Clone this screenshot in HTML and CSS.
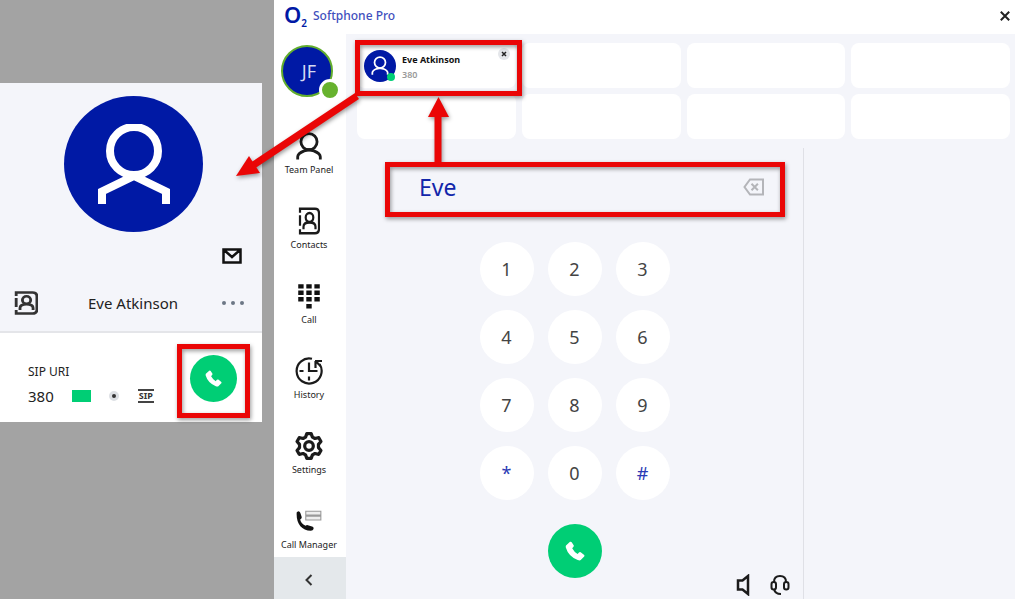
FILE: index.html
```html
<!DOCTYPE html>
<html lang="en">
<head>
<meta charset="utf-8">
<title>Softphone Pro</title>
<link rel="stylesheet" href="styles.css">
</head>
<body>
<svg class="symbols" aria-hidden="true">
  <symbol id="person" viewBox="0 0 72 80">
    <circle cx="36" cy="27" r="24"/>
    <path d="M4 80V67.500L36 52l32 15.500V80"/>
  </symbol>
  <symbol id="contact" viewBox="0 0 22 24" preserveAspectRatio="none">
    <path d="M2 5V1.500h15q4 0 4 4v13q0 4-4 4H2V19M2 7v9"/>
    <circle cx="11.500" cy="9" r="3.800"/>
    <path d="M5.500 19v-2q0-3.800 6-3.800t6 3.800v2"/>
  </symbol>
  <symbol id="handset" viewBox="0 0 20 20">
    <path d="M1 4.500 5 .8Q6 .3 6.700 1.300L8.800 4.400Q9 5.200 8.300 6L7.200 7.300Q9.300 11.200 12.600 13.100L14 11.500q.8-.8 1.700-.2l3.500 2.700q.6.800 0 1.600l-3.500 3.500q-1 .6-3-.1Q3.500 15.500.8 6.500.6 5.200 1 4.500Z"/>
  </symbol>
</svg>
<div class="stage">
  <aside class="backdrop">
    <section class="card">
      <div class="card-top">
        <div class="portrait"><svg class="line"><use href="#person"/></svg></div>
        <button class="plain mail" aria-label="Send mail"><svg class="mail-icon" viewBox="0 0 20 16"><path d="M1.500 1.500h17v13h-17zM2 2l8 7 8-7"/></svg></button>
        <div class="name-row">
          <svg class="contact-icon"><use href="#contact"/></svg>
          <h2>Eve Atkinson</h2>
          <button class="plain more" aria-label="More"><svg viewBox="0 0 22 4"><circle cx="2" cy="2" r="2"/><circle cx="11" cy="2" r="2"/><circle cx="20" cy="2" r="2"/></svg></button>
        </div>
      </div>
      <div class="card-bottom">
        <div class="uri">
          <div class="uri-label">SIP URI</div>
          <div class="uri-row">
            <span class="number">380</span>
            <span class="status"></span>
            <span class="dot"></span>
            <span class="sip">SIP</span>
          </div>
        </div>
        <button class="call call-small" aria-label="Call Eve Atkinson"><svg viewBox="0 0 20 20"><use href="#handset"/></svg></button>
      </div>
    </section>
  </aside>

  <div class="app">
    <header class="titlebar">
      <span class="logo">O<sub>2</sub></span>
      <h1>Softphone Pro</h1>
      <button class="plain close" aria-label="Close"><svg viewBox="0 0 10 10"><path d="m.8.8 8.400 8.400M9.200.8.8 9.200"/></svg></button>
    </header>

    <nav class="sidebar">
      <div class="me">JF<span class="presence"></span></div>
      <a class="item" href="#team"><svg class="line team" viewBox="0 0 24 26"><circle cx="12" cy="9" r="7.500"/><path d="M1.500 25.500V23q0-3 6-5.500l4.500-1 4.500 1q6 2.500 6 5.500v2.500"/></svg>Team Panel</a>
      <a class="item" href="#contacts"><svg class="line book"><use href="#contact"/></svg>Contacts</a>
      <a class="item" href="#call"><svg class="solid" viewBox="0 0 22 26"><path d="M1 2h5v4H1zM8.500 2h5v4h-5zM16 2h5v4h-5zM1 8h5v4H1zM8.500 8h5v4h-5zM16 8h5v4h-5zM1 14h5v4H1zM8.500 14h5v4h-5zM16 14h5v4h-5zM8.500 20.500h5v4h-5z"/></svg>Call</a>
      <a class="item" href="#history"><svg class="line" viewBox="0 0 28 28"><path d="M17 1.800A12.500 12.500 0 1 0 24.500 7"/><path d="M14 5.500V14h8.500M14 19.500v4M4.500 14h4M20.500 4v7M20 4h7M21 4.500l4.500 4.500"/></svg>History</a>
      <a class="item" href="#settings"><svg class="line gear" viewBox="-13 -13 26 26"><path d="M-2-11.500h4l1.200 3.300L5.500-7l3.600-.7 2 3.500L8.800-1.500v3l2.300 2.700-2 3.500L5.500 7 3.200 8.200 2 11.500h-4l-1.200-3.300L-5.500 7l-3.600.7-2-3.500 2.300-2.700v-3l-2.300-2.700 2-3.500 3.600.7 2.300-1.200Z"/><circle cx="0" cy="0" r="4"/></svg>Settings</a>
      <a class="item" href="#manager"><svg class="solid" viewBox="0 0 26 26"><path d="M1.500 6.500Q1 4.500 3 4q1.500 0 2 1.500l1.300 4q0 1.500-1.500 2 .5 3.500 5 6 1-1 2.200-.6l4.500 1.500q1.200 1 .7 2-.5 1.600-2.500 1.600C6.500 22 1.500 16 1.500 6.500Z"/><path class="bars" d="M10 4h14v3.500H10zM10 8.500h14V12H10z"/></svg>Call Manager</a>
      <button class="plain collapse" aria-label="Collapse menu"><svg viewBox="0 0 8 12"><path d="M6.500 1 1.500 6l5 5"/></svg></button>
    </nav>

    <main class="main">
      <div class="slots">
        <div class="slot contact">
          <div class="mini"><svg viewBox="0 0 24 26"><circle cx="12" cy="9" r="7.500"/><path d="M1.500 25.500V23q0-3 6-5.500l4.500-1 4.500 1q6 2.500 6 5.500v2.500"/></svg></div>
          <div class="who"><strong>Eve Atkinson</strong><span>380</span></div>
          <button class="plain remove" aria-label="Remove"><svg viewBox="0 0 6 6"><path d="m1 1 4 4M5 1 1 5"/></svg></button>
        </div>
        <div class="slot"></div><div class="slot"></div><div class="slot"></div>
        <div class="slot"></div><div class="slot"></div><div class="slot"></div><div class="slot"></div>
      </div>
      <div class="panels">
        <section class="dialer">
          <div class="entry">
            <input type="text" value="Eve" aria-label="Name or number">
            <button class="plain erase" aria-label="Delete"><svg viewBox="0 0 22 18"><path d="M7 1.500h13v15H7L1.500 9Z"/><path d="m8.500 5.800 6.400 6.400M14.900 5.800l-6.400 6.400"/></svg></button>
          </div>
          <div class="keys">
            <button>1</button><button>2</button><button>3</button>
            <button>4</button><button>5</button><button>6</button>
            <button>7</button><button>8</button><button>9</button>
            <button class="sym">*</button><button>0</button><button class="sym">#</button>
          </div>
          <button class="call call-large" aria-label="Call"><svg viewBox="0 0 20 20"><use href="#handset"/></svg></button>
          <div class="audio">
            <button class="plain" aria-label="Speaker"><svg viewBox="0 0 20 22"><path d="M3 6.500h4.500L13 2v18l-5.500-4.500H3Z"/></svg></button>
            <button class="plain" aria-label="Headset"><svg class="thin" viewBox="0 0 20 22"><path d="M4 8Q4 2 10 2t6 6M4 15q1 5 7 5"/><rect x="1.500" y="8" width="4.500" height="7.500" rx="2.200"/><rect x="14" y="8" width="4.500" height="7.500" rx="2.200"/></svg></button>
          </div>
        </section>
        <section class="side"></section>
      </div>
    </main>
  </div>

  <svg class="notes" width="1015" height="599" viewBox="0 0 1015 599" aria-hidden="true">
    <rect x="357.500" y="42.500" width="162" height="51"/>
    <rect x="387.500" y="164.500" width="395" height="50"/>
    <rect x="179.500" y="346.500" width="68" height="69"/>
    <path d="M357 96 252 166"/>
    <path class="head" d="m236 176 13-20 11 17Z"/>
    <path d="M438 163V115"/>
    <path class="head" d="m438.500 97 10.500 20h-21Z"/>
  </svg>
</div>
</body>
</html>
```

FILE: styles.css
```css
* { box-sizing: border-box; }
body { margin: 0; font-family: "Noto Sans", "Open Sans", sans-serif; color: #222; }
h1, h2 { margin: 0; font-weight: 400; }
button { font-family: inherit; border: 0; padding: 0; cursor: pointer; }
svg { display: block; }
.plain { background: none; }
.symbols { position: absolute; width: 0; height: 0; }

.stage { position: relative; display: grid; grid-template-columns: 274px 1fr; min-height: 100vh; overflow: hidden; background: #a3a3a3; }

/* Contact card */
.backdrop { padding: 83px 12px 0 0; }
.card { background: #fff; }
.card-top { display: flex; flex-direction: column; background: #f4f5fa; border-bottom: 2px solid #e4e5e9; padding: 13px 18px 15px 14px; }
.portrait { align-self: center; display: grid; place-items: center; width: 139px; height: 136px; margin-left: 9px; border-radius: 50%; background: #0019a5; }
.portrait svg { width: 72px; height: 80px; fill: none; stroke: #fff; stroke-width: 8; }
.mail { align-self: flex-end; margin: 16px 2px 0 0; }
.mail-icon { width: 20px; height: 16px; fill: none; stroke: #111; stroke-width: 2.5; }
.name-row { display: flex; align-items: center; justify-content: space-between; margin-top: 26px; }
.name-row h2 { margin-left: 6px; font-size: 15px; line-height: 26px; }
.contact-icon { width: 24px; height: 24px; fill: none; stroke: #333; stroke-width: 2.6; }
.more svg { width: 22px; height: 4px; fill: #6c7785; }
.card-bottom { display: flex; align-items: center; justify-content: space-between; padding: 22px 25px 11px 28px; }
.uri { padding-top: 4px; }
.uri-label { font-size: 12px; line-height: 22px; }
.uri-row { display: flex; align-items: center; line-height: 26px; }
.number { font-size: 15px; margin-right: 18px; }
.status { width: 19px; height: 12px; background: #00ce75; }
.dot { width: 10px; height: 10px; margin: 0 19px 0 18px; border: 3px solid #dde0e4; border-radius: 50%; background: #333; }
.sip { padding: 0 1px; border: solid #444; border-width: 2px 0; font-size: 9px; font-weight: 700; line-height: 10px; color: #333; }
.call { display: grid; place-items: center; border-radius: 50%; background: #00ce75; }
.call svg { fill: #fff; }
.call-small { width: 47px; height: 47px; margin-bottom: 9px; }
.call-small svg { width: 17px; height: 17px; }

/* Application window */
.app { display: grid; grid-template: 34px 1fr / 72px 1fr; min-height: 599px; background: #fff; }
.titlebar { grid-column: 1 / -1; display: flex; align-items: center; padding: 0 5px 3px 10px; color: #0019a5; }
.logo { width: 29px; font-size: 22px; font-weight: 600; line-height: 24px; padding-bottom: 3px; }
.logo sub { font-size: 10px; vertical-align: -4px; line-height: 0; }
.titlebar h1 { font-size: 12px; font-weight: 500; color: #3f4fbd; }
.close { margin-left: auto; }
.close svg { width: 10px; height: 10px; fill: none; stroke: #222; stroke-width: 2; }

.sidebar { display: flex; flex-direction: column; }
.me { position: relative; display: grid; place-items: center; width: 52px; height: 52px; margin: 11px 0 35px 7px; padding-left: 4px; border: 2px solid #62ad2d; border-radius: 50%; background: #0019a5; color: #d5daf3; font-size: 18px; }
.presence { position: absolute; right: -10px; bottom: -6px; width: 22px; height: 22px; border: 3px solid #fff; border-radius: 50%; background: #67b22e; }
.item { display: flex; flex-direction: column; align-items: center; gap: 2px; height: 75px; padding-right: 2px; color: #222; font-size: 9px; line-height: 16px; text-decoration: none; white-space: nowrap; }
.item svg { width: 28px; height: 28px; }
.item .line { fill: none; stroke: #1b1b1b; stroke-width: 2.2; }
.item .team { stroke-width: 2.6; }
.item .book { width: 22px; }
.item .gear { stroke-width: 3; stroke-linejoin: round; }
.item .solid { fill: #111; }
.item .bars { fill: #eee; stroke: #999; }
.collapse { display: grid; place-items: center; flex: 1; margin-top: -25px; min-height: 42px; background: #e4e8eb; padding: 4px 2px 0 0; }
.collapse svg { width: 8px; height: 12px; fill: none; stroke: #333; stroke-width: 2; }

.main { display: flex; flex-direction: column; background: #f4f5fa; padding: 9px 0 0; }
.slots { display: grid; grid-template-columns: repeat(4, 1fr); gap: 6px; padding: 0 5px 0 11px; }
.slot { height: 45px; border-radius: 8px; background: #fff; }
.contact { display: flex; align-items: center; gap: 6px; padding: 0 6px 0 7px; }
.mini { position: relative; display: grid; place-items: center; width: 32px; height: 32px; border-radius: 50%; background: #0019a5; }
.mini svg { width: 18px; height: 19px; fill: none; stroke: #fff; stroke-width: 2.4; }
.mini::after { content: ""; position: absolute; right: 1px; bottom: 1px; width: 8px; height: 8px; border-radius: 50%; background: #00ce75; }
.who { display: flex; flex-direction: column; padding-top: 2px; font-size: 9px; line-height: 15px; color: #111; }
.who span { font-weight: 600; color: #999; }
.remove { align-self: flex-start; display: grid; place-items: center; width: 12px; height: 12px; margin: 5px 0 0 auto; border-radius: 50%; background: #e4e6ea; }
.remove svg { width: 6px; height: 6px; stroke: #222; stroke-width: 1.5; }

.panels { flex: 1; display: grid; grid-template-columns: minmax(0, 457fr) minmax(0, 212fr); margin-top: 9px; }
.dialer { display: flex; flex-direction: column; align-items: center; }
.side { border-left: 1px solid #dfe0e6; }
.entry { align-self: stretch; display: flex; align-items: center; margin: 16px 38px 0 73px; height: 46px; }
.entry input { flex: 1; min-width: 0; border: 0; padding: 0; outline: 0; background: none; color: #1226aa; font: 23px/32px "Noto Sans", sans-serif; }
.erase svg { width: 22px; height: 18px; fill: none; stroke: #b4b5b9; stroke-width: 2; }
.keys { display: grid; grid-template-columns: repeat(3, 54px); gap: 14px; margin-top: 32px; }
.keys button { height: 54px; border-radius: 50%; background: #fff; color: #444; font-size: 18px; }
.keys .sym { color: #2a3ab5; }
.call-large { width: 54px; height: 54px; margin-top: 24px; }
.call-large svg { width: 20px; height: 20px; }
.audio { align-self: flex-end; display: flex; gap: 15px; margin: -4px 13px 0 0; }
.audio svg { width: 20px; height: 22px; fill: none; stroke: #1b1b1b; stroke-width: 2.5; }
.audio .thin { stroke-width: 2; }

/* Callouts drawn over the two windows */
.notes { position: absolute; top: 0; left: 0; pointer-events: none; fill: none; stroke: #ea0606; stroke-width: 5; filter: drop-shadow(1px 2px 2px rgb(0 0 0 / 40%)); }
.notes path { stroke-width: 7; }
.notes .head { fill: #ea0606; stroke: none; }
```
